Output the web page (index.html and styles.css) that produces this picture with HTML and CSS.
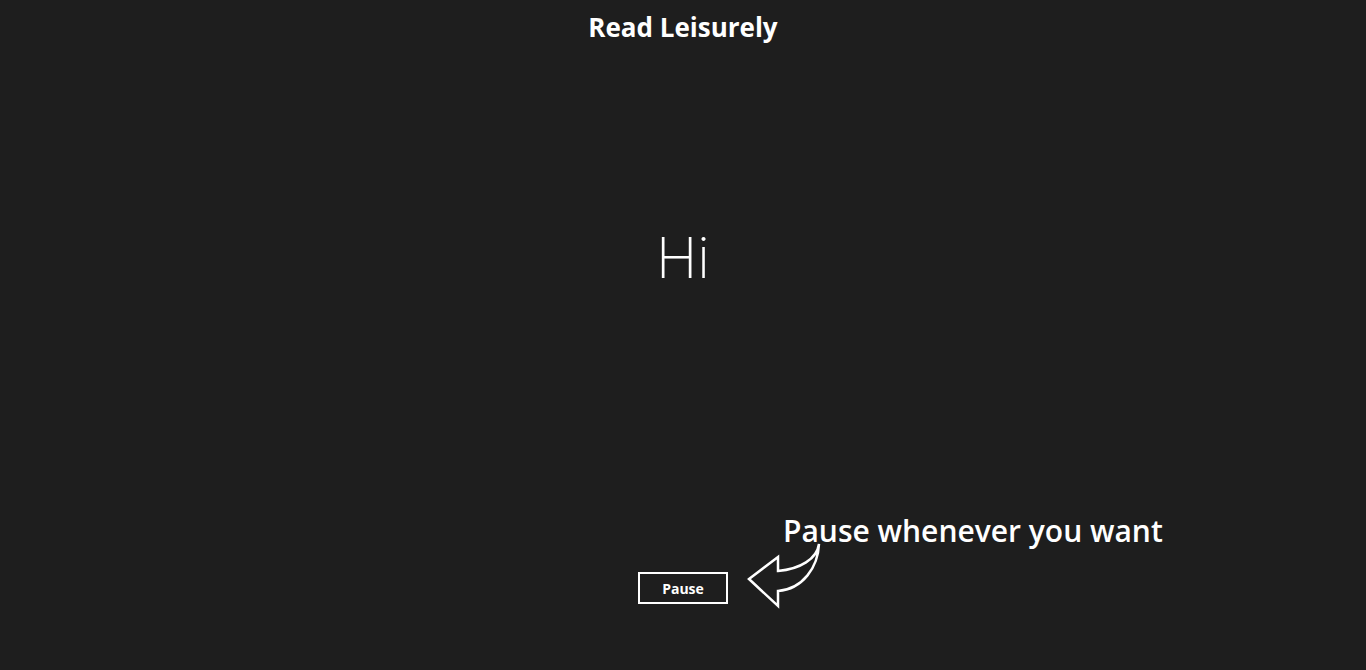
FILE: index.html
```html
<!DOCTYPE html>
<html>
<head>
<meta charset="utf-8">
<title>Read Leisurely</title>
<link rel="stylesheet" href="styles.css">
</head>
<body>
<div class="app">
  <header class="title">Read Leisurely</header>
  <main class="reader">
    <div class="word">Hi</div>
  </main>
  <footer class="controls">
    <div class="control-wrap">
      <button class="pause-btn">Pause</button>
      <div class="hint">
        <svg class="hint-arrow" width="80" height="72" viewBox="0 0 80 72">
          <path d="M4,40 L33,18 L33,32 C55,30 72,20 74,5 C73,28 58,50 33,52 L33,67 Z" fill="none" stroke="#fff" stroke-width="2.5" stroke-linejoin="miter"/>
        </svg>
        <span class="hint-text">Pause whenever you want</span>
      </div>
    </div>
  </footer>
</div>
</body>
</html>
```
FILE: styles.css
```css
html, body {
  margin: 0;
  padding: 0;
  background: #1e1e1e;
  color: #fff;
}
.app {
  height: 670px;
  display: flex;
  flex-direction: column;
  align-items: center;
}
.title {
  font-family: "Open Sans", "Liberation Sans", sans-serif;
  font-weight: 700;
  font-size: 26px;
  line-height: 34px;
  padding-top: 10px;
}
.reader {
  height: 440px;
  display: flex;
  align-items: center;
  justify-content: center;
}
.word {
  font-family: "Inter", "Liberation Sans", sans-serif;
  font-weight: 200;
  font-size: 56px;
  line-height: 70px;
  margin-top: -12px;
}
.controls {
  padding-top: 88px;
}
.control-wrap {
  position: relative;
}
.pause-btn {
  display: block;
  width: 90px;
  height: 32px;
  background: transparent;
  border: 2px solid #fff;
  color: #fff;
  font-family: "Open Sans", "Liberation Sans", sans-serif;
  font-weight: 700;
  font-size: 14px;
  padding: 0;
}
.hint {
  position: absolute;
  left: 107px;
  top: -33px;
  width: 440px;
  height: 80px;
}
.hint-arrow {
  position: absolute;
  left: 0;
  top: 0;
}
.hint-text {
  position: absolute;
  left: 38px;
  top: -28px;
  font-family: "Open Sans", "Liberation Sans", sans-serif;
  font-weight: 600;
  font-size: 30px;
  white-space: nowrap;
  line-height: 40px;
}
```
